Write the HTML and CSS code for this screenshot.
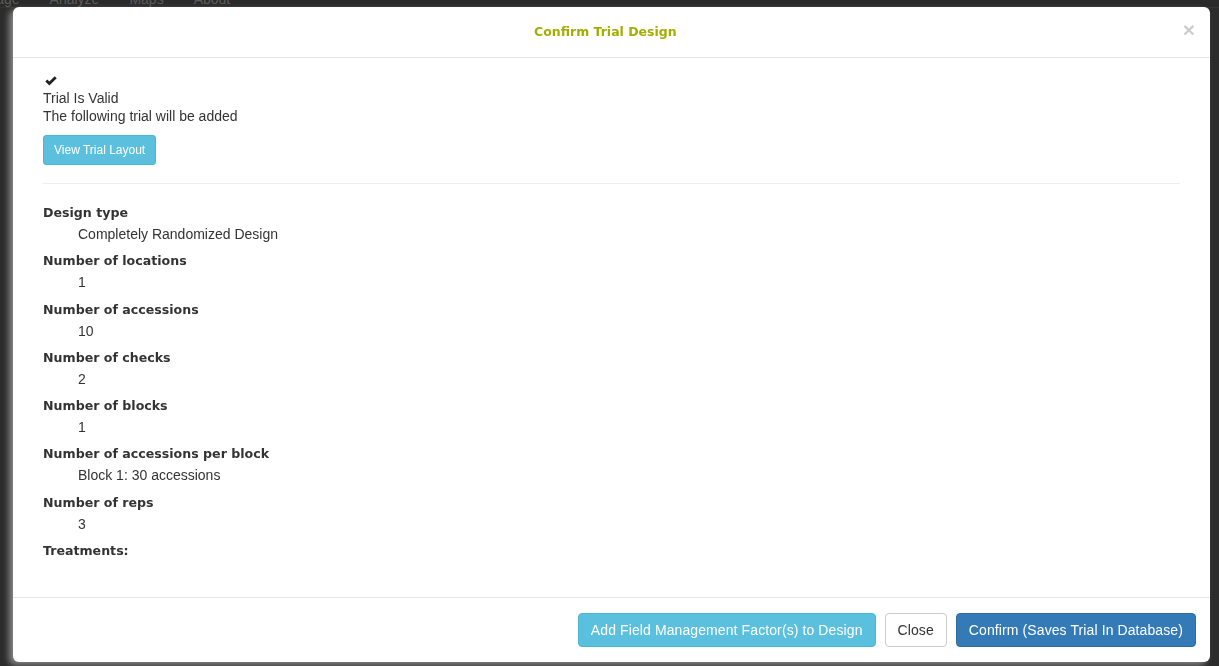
FILE: index.html
```html
<!DOCTYPE html>
<html>
<head>
<meta charset="utf-8">
<link rel="stylesheet" href="styles.css">
</head>
<body>
<div class="page">
  <nav class="navbar">
    <ul class="nav">
      <li>Manage</li>
      <li>Analyze</li>
      <li>Maps</li>
      <li>About</li>
    </ul>
  </nav>
  <div class="page-strip"></div>
</div>

<div class="modal">
  <div class="modal-content">
    <div class="modal-header">
      <button class="close" type="button">×</button>
      <h4 class="modal-title">Confirm Trial Design</h4>
    </div>
    <div class="modal-body">
      <div class="container">
        <div class="check-line">
          <svg class="check" width="12" height="10" viewBox="0 0 12 10"><path d="M0.3 5.4 L2.3 3.4 L4.4 5.5 L9.7 0.2 L11.7 2.2 L4.4 9.5 Z" fill="#222"/></svg>
        </div>
        <div class="line">Trial Is Valid</div>
        <div class="line">The following trial will be added</div>
        <button class="btn btn-info btn-sm" type="button">View Trial Layout</button>
        <hr class="divider">
        <dl class="summary">
          <dt>Design type</dt>
          <dd>Completely Randomized Design</dd>
          <dt>Number of locations</dt>
          <dd>1</dd>
          <dt>Number of accessions</dt>
          <dd>10</dd>
          <dt>Number of checks</dt>
          <dd>2</dd>
          <dt>Number of blocks</dt>
          <dd>1</dd>
          <dt>Number of accessions per block</dt>
          <dd>Block 1: 30 accessions</dd>
          <dt>Number of reps</dt>
          <dd>3</dd>
          <dt>Treatments:</dt>
        </dl>
      </div>
    </div>
    <div class="modal-footer">
      <button class="btn btn-info" type="button">Add Field Management Factor(s) to Design</button>
      <button class="btn btn-default" type="button">Close</button>
      <button class="btn btn-primary" type="button">Confirm (Saves Trial In Database)</button>
    </div>
  </div>
</div>
</body>
</html>
```

FILE: styles.css
```css
html, body {
  margin: 0;
  padding: 0;
  height: 100%;
  overflow: hidden;
}

body {
  background: #2c2c2c;
  font-family: "Liberation Sans", Arial, sans-serif;
  font-size: 14px;
  color: #333;
}

.page {
  height: 100%;
  display: flex;
  flex-direction: column;
}

.navbar {
  height: 7px;
  overflow: hidden;
  background: #2a2a2a;
  border-bottom: 1px solid #363636;
}

.nav {
  list-style: none;
  margin: -9px 0 0 -46px;
  padding: 0;
  display: flex;
}

.nav li {
  padding: 0 15px;
  font-size: 14px;
  line-height: 16px;
  color: #5c5c5c;
}

.page-strip {
  flex: 1;
}

.modal {
  position: fixed;
  left: 13px;
  top: 7px;
  width: 1197px;
}

.modal-content {
  background: #fff;
  border-radius: 6px;
  box-shadow: -4px 3px 6px rgba(210, 210, 210, 0.55);
  overflow: hidden;
}

.modal-header {
  padding: 15px;
  border-bottom: 1px solid #e5e5e5;
}

.close {
  float: right;
  margin-top: -2px;
  padding: 0;
  border: 0;
  background: transparent;
  font-family: "Liberation Sans", Arial, sans-serif;
  font-size: 21px;
  font-weight: bold;
  line-height: 20px;
  color: #000;
  opacity: 0.2;
}

.modal-title {
  margin: 0;
  text-align: center;
  font-family: "DejaVu Sans", sans-serif;
  font-weight: bold;
  font-size: 12.5px;
  line-height: 20px;
  color: #a2ae00;
}

.modal-body {
  padding: 15px 15px 36px;
}

.container {
  padding: 0 15px;
}

.check-line {
  height: 16px;
  display: flex;
  align-items: center;
  padding-left: 2px;
}

.line {
  line-height: 18px;
}

.btn {
  display: inline-block;
  font-family: "Liberation Sans", Arial, sans-serif;
  font-size: 14px;
  line-height: 20px;
  padding: 6px 12px;
  border: 1px solid transparent;
  border-radius: 4px;
  cursor: pointer;
}

.btn-sm {
  font-size: 12px;
  line-height: 18px;
  padding: 5px 10px;
  border-radius: 3px;
  margin-top: 10px;
}

.btn-info {
  background: #5bc0de;
  border-color: #46b8da;
  color: #fff;
}

.btn-default {
  background: #fff;
  border-color: #ccc;
  color: #333;
}

.btn-primary {
  background: #337ab7;
  border-color: #2e6da4;
  color: #fff;
}

.divider {
  margin: 18px 0 0;
  border: 0;
  border-top: 1px solid #eee;
  height: 0;
}

.summary {
  margin: 19px 0 0;
}

.summary dt {
  font-family: "DejaVu Sans", sans-serif;
  font-weight: bold;
  font-size: 12.6px;
  line-height: 20px;
  color: #333;
}

.summary dd {
  margin: 1px 0 7.3px 35px;
  font-size: 14px;
  line-height: 20px;
}

.modal-footer {
  border-top: 1px solid #e5e5e5;
  padding: 15px 14px 15px 15px;
  display: flex;
  justify-content: flex-end;
  gap: 9px;
}

.modal-footer .btn {
  letter-spacing: 0.1px;
}
```
